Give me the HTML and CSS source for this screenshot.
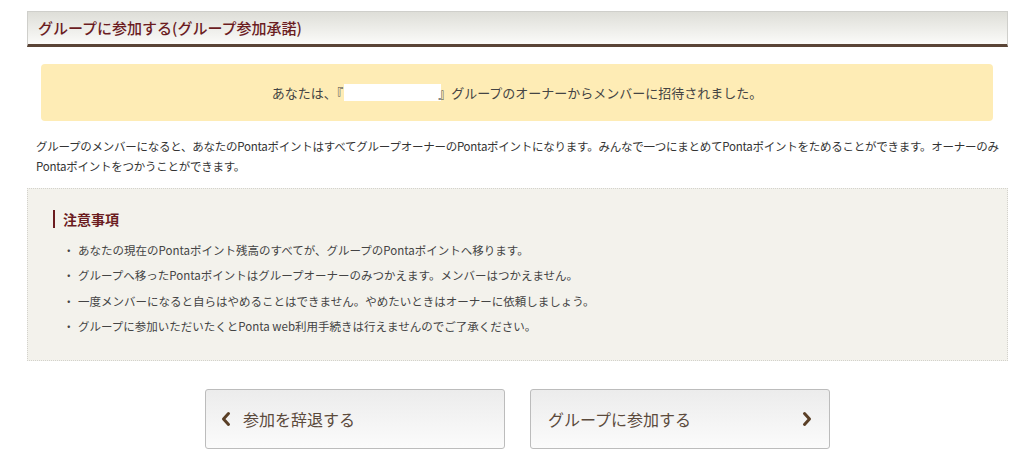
FILE: index.html
```html
<!DOCTYPE html>
<html lang="ja">
<head>
<meta charset="utf-8">
<title>グループに参加する</title>
<link rel="stylesheet" href="styles.css">
</head>
<body>
<div class="page">
  <div class="title-bar"><h1 class="title">グループに参加する(グループ参加承諾)</h1></div>

  <div class="invite">あなたは、『<span class="blank"></span>』グループのオーナーからメンバーに招待されました。</div>

  <p class="desc">グループのメンバーになると、あなたのPontaポイントはすべてグループオーナーのPontaポイントになります。みんなで一つにまとめてPontaポイントをためることができます。オーナーのみPontaポイントをつかうことができます。</p>

  <div class="notice">
    <h2 class="notice-title">注意事項</h2>
    <ul class="notice-list">
      <li>あなたの現在のPontaポイント残高のすべてが、グループのPontaポイントへ移ります。</li>
      <li>グループへ移ったPontaポイントはグループオーナーのみつかえます。メンバーはつかえません。</li>
      <li>一度メンバーになると自らはやめることはできません。やめたいときはオーナーに依頼しましょう。</li>
      <li>グループに参加いただいたくとPonta web利用手続きは行えませんのでご了承ください。</li>
    </ul>
  </div>

  <div class="actions">
    <a class="btn btn-back" href="#">
      <svg class="chev" width="10" height="16" viewBox="0 0 10 16"><polyline points="7.5,2.5 2.5,8 7.5,13.5" fill="none" stroke="#5a3f26" stroke-width="3" stroke-linecap="round" stroke-linejoin="round"/></svg>
      <span>参加を辞退する</span>
    </a>
    <a class="btn btn-next" href="#">
      <span>グループに参加する</span>
      <svg class="chev" width="10" height="16" viewBox="0 0 10 16"><polyline points="2.5,2.5 7.5,8 2.5,13.5" fill="none" stroke="#5a3f26" stroke-width="3" stroke-linecap="round" stroke-linejoin="round"/></svg>
    </a>
  </div>
</div>
</body>
</html>
```

FILE: styles.css
```css
html, body {
  margin: 0;
  padding: 0;
  background: #ffffff;
}
body {
  font-family: "Noto Sans CJK JP", "Noto Sans", sans-serif;
  color: #333333;
}
.page {
  width: 981px;
  margin-left: 27px;
  padding-top: 11px;
}
.title-bar {
  box-sizing: border-box;
  height: 36px;
  border: 1px solid #cfcfcb;
  border-bottom: 3px solid #5a4436;
  background: linear-gradient(#deded8, #fbfbf9);
  display: flex;
  align-items: center;
  padding-left: 10px;
}
.title {
  margin: 0;
  font-size: 15px;
  font-weight: 500;
  color: #6b1c1f;
  line-height: 20px;
}
.invite {
  margin: 17px 15px 0 14px;
  height: 57px;
  background: #feecb5;
  border-radius: 4px;
  display: flex;
  align-items: center;
  justify-content: center;
  font-size: 13px;
  color: #444444;
}
.blank {
  display: inline-block;
  width: 97px;
  height: 17px;
  background: #ffffff;
  margin: 0 -3px 0 1px;
}
.desc {
  margin: 15px 0 0;
  padding-left: 9px;
  font-size: 11.5px;
  letter-spacing: -0.25px;
  line-height: 20px;
  color: #333333;
}
.notice {
  box-sizing: border-box;
  margin-top: 12px;
  height: 173px;
  background: #f3f2ec;
  border: 1px dotted #d3d2cc;
  padding: 21px 0 0 25px;
}
.notice-title {
  margin: 0;
  border-left: 2px solid #6b1c1f;
  padding-left: 8px;
  font-size: 14px;
  font-weight: bold;
  color: #6b1c1f;
  line-height: 18px;
}
.notice-list {
  list-style: none;
  margin: 10px 0 0;
  padding: 0 0 0 10px;
}
.notice-list li {
  font-size: 11.5px;
  line-height: 25.3px;
  color: #444444;
  display: flex;
}
.notice-list li::before {
  content: "・";
  width: 15px;
  flex: none;
}
.actions {
  display: flex;
  justify-content: center;
  gap: 25px;
  margin-top: 28px;
}
.btn {
  box-sizing: border-box;
  width: 300px;
  height: 60px;
  border: 1px solid #bcbcbc;
  border-radius: 3px;
  background: linear-gradient(#ececec, #fbfbfb);
  display: flex;
  align-items: center;
  text-decoration: none;
  color: #5b4a3c;
  font-size: 16px;
}
.btn-back {
  padding-left: 15px;
  gap: 12px;
}
.btn-next {
  padding: 0 17px 0 17px;
  justify-content: space-between;
}
.chev {
  flex: none;
}
```
